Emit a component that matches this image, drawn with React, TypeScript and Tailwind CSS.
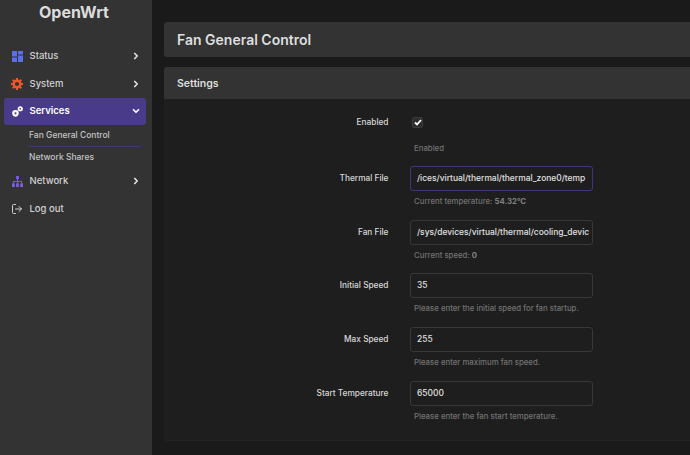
import React from "react";
import { ChevronRight, ChevronDown, LogOut } from "lucide-react";

const Status = () => (
  <svg width="11" height="11" viewBox="0 0 11 11"><g fill="#5a6fe8"><rect x="0" y="0" width="5" height="5.5" /><rect x="6" y="0" width="5" height="3.5" /><rect x="0" y="6.5" width="5" height="4.5" /><rect x="6" y="4.5" width="5" height="6.5" /></g></svg>
);
const Gear = () => (
  <svg width="12" height="12" viewBox="0 0 13 13"><circle cx="6.5" cy="6.5" r="3.6" fill="none" stroke="#f0562b" strokeWidth="2.6" /><g stroke="#f0562b" strokeWidth="2.2"><path d="M6.5 0v2.5M6.5 10.5V13M0 6.5h2.5M10.5 6.5H13M1.9 1.9l1.8 1.8M9.3 9.3l1.8 1.8M1.9 11.1l1.8-1.8M9.3 3.7l1.8-1.8" /></g></svg>
);
const Cogs = () => (
  <svg width="11" height="11" viewBox="0 0 12 12"><circle cx="3.8" cy="8" r="2.4" fill="none" stroke="#fff" strokeWidth="2.4" /><circle cx="9" cy="3" r="1.9" fill="none" stroke="#fff" strokeWidth="1.9" /></svg>
);
const Tree = () => (
  <svg width="11" height="11" viewBox="0 0 12 12" fill="#7d5fe0"><rect x="4.5" y="0" width="3" height="3.5" /><rect x="5.5" y="3" width="1" height="3" /><rect x="1" y="5.5" width="10" height="1" /><rect x="1" y="6" width="1" height="2" /><rect x="10" y="6" width="1" height="2" /><rect x="5.5" y="6" width="1" height="2" /><rect x="0" y="8" width="3" height="4" /><rect x="4.5" y="8" width="3" height="4" /><rect x="9" y="8" width="3" height="4" /></svg>
);

function Nav({ icon, label, chevron = true }: { icon: React.ReactNode; label: string; chevron?: boolean }) {
  return (
    <div className="flex items-center h-[27.5px] pl-2 pr-[11px] text-[#d0d0d0]">
      <span className="w-[18px] flex justify-center">{icon}</span>
      <span className="ml-[3.5px] flex-1 text-[9.5px] font-medium">{label}</span>
      {chevron && <ChevronRight size={10} strokeWidth={4} className="text-[#e6e6e6]" />}
    </div>
  );
}

function Field({ label, value, help, focus, mt }: { label: string; value: string; help: React.ReactNode; focus?: boolean; mt: string }) {
  return (
    <div className={`flex ${mt}`}>
      <div className="w-[224.5px] h-[25px] flex items-center justify-end text-[8.3px] font-medium text-[#d8d8d8]">{label}</div>
      <div className="ml-[21.5px]">
        <div className={`w-[183px] h-[25px] rounded-[3px] border flex items-center pl-[6px] text-[8.45px] font-medium text-[#e0e0e0] overflow-hidden whitespace-nowrap ${focus ? "border-[#41347f]" : "border-[#383838]"}`}>{value}</div>
        <div className="mt-[5px] ml-[4px] text-[7.8px] leading-[11px] text-[#737373] font-medium">{help}</div>
      </div>
    </div>
  );
}

export default function App() {
  return (
    <div className="w-[690px] h-[455px] overflow-hidden flex bg-[#1a1a1a] font-['Inter',sans-serif]">
      <aside className="w-[152px] h-full shrink-0 bg-[#333333] flex flex-col">
        <div className="h-[42.5px] pl-[39px] pt-[1px] text-[16px] font-bold text-[#dcdcdc] leading-[22px]">OpenWrt</div>
        <div>
          <Nav icon={<Status />} label="Status" />
          <Nav icon={<Gear />} label="System" />
          <div className="ml-1 w-[142px] flex items-center h-[27px] pl-1 pr-[5px] rounded-[3px] bg-[#4a3b8a] text-white">
            <span className="w-[18px] flex justify-center"><Cogs /></span>
            <span className="ml-[3.5px] flex-1 text-[9.5px] font-semibold">Services</span>
            <ChevronDown size={10} strokeWidth={4} />
          </div>
          <div className="ml-[29px] mr-[11px] mt-[1px]">
            <div className="h-[21px] border-b border-[#433672] text-[8.5px] font-medium text-[#c4c4c4] flex items-center">Fan General Control</div>
            <div className="h-[21px] text-[8.5px] font-medium text-[#c4c4c4] flex items-center">Network Shares</div>
          </div>
          <Nav icon={<Tree />} label="Network" />
          <Nav icon={<LogOut size={12} strokeWidth={2} className="text-[#d0d0d0]" />} label="Log out" chevron={false} />
        </div>
      </aside>
      <main className="flex-1 pl-[12px] pt-[22px] min-w-0">
        <div className="h-[35px] rounded-l-[3px] bg-[#333333] flex items-center pl-[13px] text-[14px] font-semibold text-[#dedede]">Fan General Control</div>
        <div className="mt-[10px] h-[374px] rounded-l-[3px] bg-[#1e1e1e] border-b border-[#222222]">
          <div className="h-[32px] rounded-tl-[3px] bg-[#333333] flex items-center pl-[13px] pt-[1px] text-[10.5px] font-semibold text-[#dedede]">Settings</div>
          <div>
            <div className="flex mt-[16px] h-[14px] items-center">
              <div className="w-[224.5px] flex justify-end text-[8.3px] font-medium text-[#d8d8d8]">Enabled</div>
              <div className="ml-[21.5px] pl-[2px]">
                <div className="w-[11px] h-[11px] rounded-[2px] bg-[#2c2c2c] border border-[#3c3c3c] flex items-center justify-center">
                  <svg width="8" height="7" viewBox="0 0 8 7"><path d="M1 3.5L3 5.5L7 1" fill="none" stroke="#fff" strokeWidth="1.8" /></svg>
                </div>
              </div>
            </div>
            <div className="ml-[250px] mt-[14px] text-[7.8px] leading-[11px] text-[#737373] font-medium">Enabled</div>
            <Field mt="mt-[12px]" focus label="Thermal File" value="/ices/virtual/thermal/thermal_zone0/temp" help={<>Current temperature: <b className="text-[#808080]">54.32°C</b></>} />
            <Field mt="mt-[13px]" label="Fan File" value="/sys/devices/virtual/thermal/cooling_devic" help={<>Current speed: <b className="text-[#808080]">0</b></>} />
            <Field mt="mt-[12px]" label="Initial Speed" value="35" help="Please enter the initial speed for fan startup." />
            <Field mt="mt-[13px]" label="Max Speed" value="255" help="Please enter maximum fan speed." />
            <Field mt="mt-[13px]" label="Start Temperature" value="65000" help="Please enter the fan start temperature." />
          </div>
        </div>
      </main>
    </div>
  );
}
